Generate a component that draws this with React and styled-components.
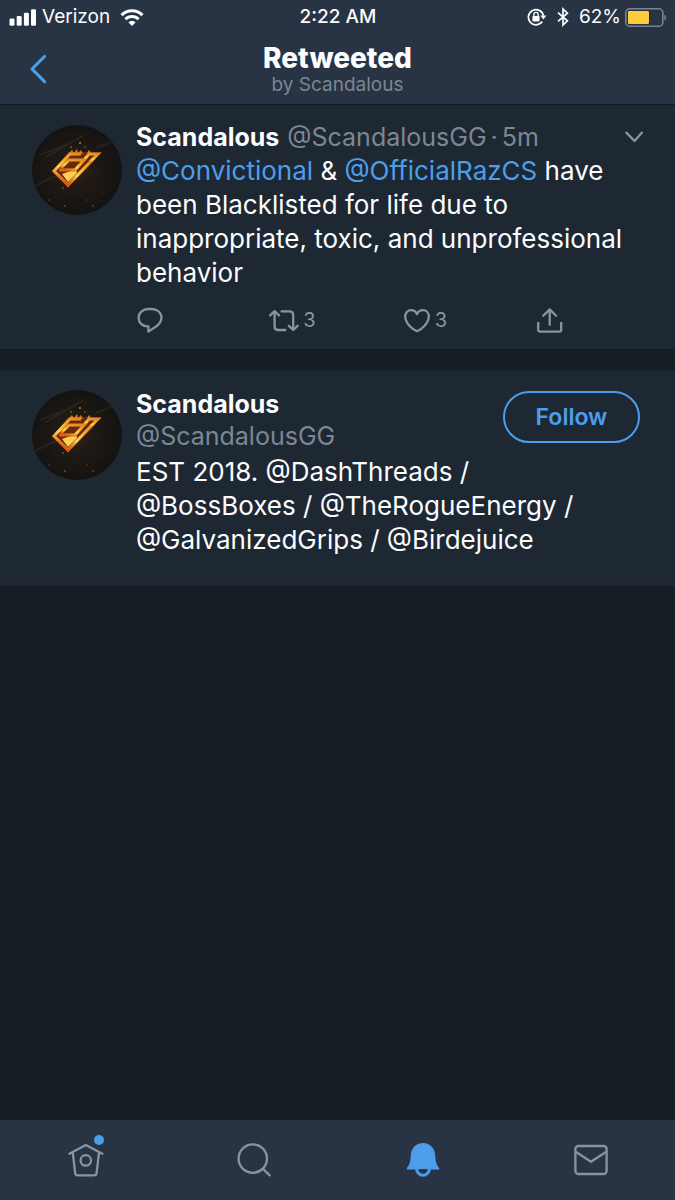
import React from 'react';
import styled, { createGlobalStyle, css } from 'styled-components';

const colors = {
  bar: '#283444',
  card: '#1e2833',
  page: '#171e25',
  line: '#111a22',
  blue: '#4c9eeb',
  grey: '#8794a3',
  muted: '#7c8793',
  white: '#fbfdff',
};

const GlobalStyle = createGlobalStyle`
  * {
    box-sizing: border-box;
  }

  body {
    margin: 0;
    background: ${colors.page};
    color: ${colors.white};
    font-family: Inter, 'Liberation Sans', sans-serif;
  }

  h1, h2, p {
    margin: 0;
  }

  a {
    color: ${colors.blue};
    text-decoration: none;
  }

  svg {
    display: block;
    flex: none;
  }
`;

const Screen = styled.div`
  display: flex;
  flex-direction: column;
  min-height: 100vh;
`;

const TopBar = styled.header`
  background: ${colors.bar};
  border-bottom: 1px solid ${colors.line};
`;

const StatusBar = styled.div`
  display: grid;
  grid-template-columns: 1fr auto 1fr;
  align-items: center;
  height: 34px;
  padding: 0 8px 0 9px;
  font-size: 19px;
  line-height: 24px;
`;

const StatusGroup = styled.div`
  display: flex;
  align-items: center;
  gap: ${({ $gap }) => $gap}px;
  justify-content: ${({ $end }) => ($end ? 'flex-end' : 'flex-start')};
`;

const Clock = styled.span`
  font-weight: 500;
`;

const NavBar = styled.div`
  display: grid;
  grid-template-columns: 76px 1fr 76px;
  align-items: center;
  height: 70px;
  text-align: center;
`;

const IconButton = styled.button`
  display: flex;
  align-items: center;
  gap: ${({ $gap }) => $gap || 0}px;
  padding: 0;
  border: 0;
  background: none;
  color: ${({ $blue }) => ($blue ? colors.blue : colors.grey)};
  font: inherit;
  font-size: 20px;
  line-height: 28px;
`;

const BackButton = styled(IconButton)`
  justify-content: center;
`;

const Title = styled.h1`
  font-size: 28px;
  line-height: 32px;
  font-weight: 800;
`;

const Subtitle = styled.p`
  color: ${colors.muted};
  font-size: 19px;
  line-height: 22px;
`;

const cardStyles = css`
  display: grid;
  grid-template-columns: 90px minmax(0, 1fr);
  column-gap: 14px;
  background: ${colors.card};
  border-bottom: 1px solid ${colors.line};
`;

const Tweet = styled.article`
  ${cardStyles}
  padding: 15px 32px 14px;
`;

const Profile = styled.section`
  ${cardStyles}
  margin-top: 19px;
  padding: 17px 35px 29px 32px;
  border-top: 1px solid ${colors.line};
`;

const AvatarLink = styled.a`
  align-self: start;
  padding-top: ${({ $top }) => $top}px;
`;

const Row = styled.div`
  display: flex;
  align-items: ${({ $align }) => $align || 'center'};
  justify-content: space-between;
`;

const Name = styled.h2`
  font-size: 25px;
  line-height: 34px;
  font-weight: 700;
`;

const Handle = styled.span`
  color: ${colors.muted};
  font-size: 25px;
  line-height: 30px;
`;

const Byline = styled.div`
  display: flex;
  align-items: center;
  gap: 8px;
  height: 34px;
`;

const Meta = styled.div`
  display: flex;
  gap: 4px;
`;

const Text = styled.p`
  font-size: 26px;
  line-height: 34px;
`;

const Bio = styled(Text)`
  padding-right: 16px;
`;

const Actions = styled.div`
  display: grid;
  grid-template-columns: repeat(3, 1fr) 26px;
  margin-top: 15px;
  padding: 1px 81px 1px 0;
`;

const FollowButton = styled.button`
  width: 137px;
  height: 52px;
  margin-top: 4px;
  border: 2px solid ${colors.blue};
  border-radius: 26px;
  background: none;
  color: ${colors.blue};
  font: inherit;
  font-size: 23px;
  font-weight: 600;
`;

const ProfileNames = styled.div`
  display: flex;
  flex-direction: column;
  padding-bottom: 4px;
`;

const TabBar = styled.nav`
  display: grid;
  grid-template-columns: repeat(4, 1fr);
  align-items: center;
  height: 80px;
  margin-top: auto;
  padding-left: 2px;
  background: ${colors.bar};
`;

const Tab = styled.a`
  display: flex;
  justify-content: center;
  color: ${({ $active }) => ($active ? colors.blue : colors.grey)};
`;

const TabIcon = styled.span`
  position: relative;
`;

const Dot = styled.span`
  position: absolute;
  top: -8px;
  right: 0;
  width: 10px;
  height: 10px;
  border-radius: 50%;
  background: ${colors.blue};
`;

const Stroke = ({ width, height, strokeWidth = 2.3, children }) => (
  <svg
    width={width}
    height={height}
    viewBox={`0 0 ${width} ${height}`}
    fill="none"
    stroke="currentColor"
    strokeWidth={strokeWidth}
    strokeLinecap="round"
    strokeLinejoin="round"
    aria-hidden="true"
  >
    {children}
  </svg>
);

const SignalIcon = () => (
  <svg width="27" height="17" viewBox="0 0 27 17" fill="currentColor">
    <rect x="0.5" y="9.5" width="5" height="7.3" rx="1.3" />
    <rect x="7.7" y="7" width="5" height="9.8" rx="1.3" />
    <rect x="14.9" y="3.8" width="5" height="13" rx="1.3" />
    <rect x="22" y="0.3" width="5" height="16.5" rx="1.3" />
  </svg>
);

const WifiIcon = () => (
  <svg width="24" height="17" viewBox="0 0 24 17" fill="none">
    <g stroke="currentColor" strokeWidth="3">
      <path d="M1.5 6.1A14.6 14.6 0 0 1 22.5 6.1" />
      <path d="M5.4 10.2A9.2 9.2 0 0 1 18.6 10.2" />
    </g>
    <path d="M8.4 13.2A5 5 0 0 1 15.6 13.2L12 16.9Z" fill="currentColor" />
  </svg>
);

const LockIcon = () => (
  <svg width="20" height="18" viewBox="0 0 20 18" fill="none">
    <path
      d="M15.2 13.6A7.6 7.6 0 1 1 16.4 7.6"
      stroke="currentColor"
      strokeWidth="1.7"
    />
    <path d="M13.3 7.4H19.4L16.4 11.5Z" fill="currentColor" />
    <rect x="5.4" y="8" width="7.2" height="5.4" rx="0.8" fill="currentColor" />
    <path
      d="M6.9 8.3V6.5A2.1 2.1 0 0 1 11.1 6.5V8.3"
      stroke="currentColor"
      strokeWidth="1.4"
    />
  </svg>
);

const BluetoothIcon = () => (
  <svg width="12" height="20" viewBox="0 0 12 20" fill="none">
    <path
      d="M1 5.6L10.4 13.8L6 18V2L10.4 6.2L1 14.4"
      stroke="currentColor"
      strokeWidth="1.7"
    />
  </svg>
);

const BatteryIcon = () => (
  <svg width="42" height="19" viewBox="0 0 42 19" fill="none">
    <rect
      x="0.8"
      y="0.8"
      width="37"
      height="17.4"
      rx="4"
      stroke="#7b8491"
      strokeWidth="1.6"
    />
    <path d="M23.5 3H25V16H23.5Z" fill="#1d2530" />
    <rect x="3" y="3" width="21" height="13" rx="1.2" fill="#fdcd3f" />
    <path d="M39.4 6.5A3.4 3.4 0 0 1 39.4 12.5Z" fill="#7b8491" />
  </svg>
);

const Avatar = ({ id }) => (
  <svg width="90" height="90" viewBox="0 0 90 90" role="img" aria-label="Scandalous">
    <defs>
      <radialGradient id={`${id}-bg`} cx="0.48" cy="0.5" r="0.55">
        <stop offset="0" stopColor="#3a1f0c" />
        <stop offset="0.35" stopColor="#1f1a15" />
        <stop offset="1" stopColor="#131210" />
      </radialGradient>
      <linearGradient id={`${id}-fire`} x1="0.9" y1="0" x2="0.3" y2="1">
        <stop offset="0" stopColor="#e98a20" />
        <stop offset="0.35" stopColor="#f3a52a" />
        <stop offset="0.65" stopColor="#ffd153" />
        <stop offset="1" stopColor="#e2600f" />
      </linearGradient>
      <clipPath id={`${id}-clip`}>
        <circle cx="45" cy="45" r="45" />
      </clipPath>
    </defs>
    <g clipPath={`url(#${id}-clip)`}>
      <rect width="90" height="90" fill={`url(#${id}-bg)`} />
      <g stroke="#857d6c" strokeOpacity="0.13" strokeWidth="2">
        <path d="M12 33L52 10M0 62L26 50M64 23L84 15M8 30L34 20" />
      </g>
      <path
        d="M36 27H69L59 40L36 62L20 47Z"
        fill="#8f3408"
        fillOpacity="0.6"
      />
      <path
        d="M30 49L44 44L45 48L36 57Z"
        fill="#ffcf4d"
      />
      <g
        fill="none"
        stroke={`url(#${id}-fire)`}
        strokeWidth="3"
        strokeLinejoin="miter"
      >
        <path d="M49 29H38L22 46L36 60L60 35" />
        <path d="M51 36L57 29H66L58 37" />
        <path d="M29 43L37 35H52L43 45H27" />
      </g>
      <path d="M24 48L36 59L43 52L36 63Z" fill="#d9530c" fillOpacity="0.7" />
      <g fill="#e2761b">
        <path d="M37 28L40 25L42 28L45 24L46 28L49 25L51 29Z" />
        <path d="M55 28L57 25L59 28Z" />
        <circle cx="48" cy="18" r="1" />
        <circle cx="39" cy="22" r="0.8" />
        <circle cx="53" cy="22" r="0.7" />
        <circle cx="31" cy="63" r="0.7" />
      </g>
      <g fill="#8a3d10">
        <circle cx="17" cy="75" r="0.8" />
        <circle cx="33" cy="81" r="1" />
        <circle cx="55" cy="75" r="0.7" />
        <circle cx="61" cy="81" r="0.9" />
        <circle cx="70" cy="69" r="0.6" />
      </g>
    </g>
  </svg>
);

const ReplyIcon = () => (
  <Stroke width={28} height={28}>
    <path d="M12.4 3H15.9C21.4 3 25.4 6.8 25.4 11.8C25.4 15.4 23.4 18 20.4 20.2L12.4 25.6V20.4H11.2C6.4 20.4 2.6 16.6 2.6 11.8C2.6 6.8 6.8 3 12.4 3Z" />
  </Stroke>
);

const RetweetIcon = () => (
  <Stroke width={30} height={28}>
    <path d="M1.2 9.4L5.6 5.2L10 9.4M5.6 5.6V20.4Q5.6 24 9.2 24H16.4" />
    <path d="M12.6 5.4H20.6Q24.2 5.4 24.2 9V23.6M19.8 19.8L24.2 24L28.6 19.8" />
  </Stroke>
);

const HeartIcon = () => (
  <Stroke width={28} height={28}>
    <path d="M14 25.3C9.4 23.4 2.2 17.2 2.2 10.6C2.2 6.8 4.8 4.1 8.1 4.1C10.8 4.1 13 5.5 14 8.2C15 5.5 17.2 4.1 19.9 4.1C23.2 4.1 25.8 6.8 25.8 10.6C25.8 17.2 18.6 23.4 14 25.3Z" />
  </Stroke>
);

const ShareIcon = () => (
  <Stroke width={28} height={28}>
    <path d="M2.2 16.8V23.8Q2.2 25.6 4 25.6H23.4Q25.2 25.6 25.2 23.8V16.8" />
    <path d="M13.7 18.8V3.6M7.3 9.8L13.7 3.4L20.1 9.8" />
  </Stroke>
);

const HomeIcon = () => (
  <Stroke width={36} height={34}>
    <path d="M1.4 10.8L17.8 2L34.4 10.8M4.8 9.6L7.2 30.2Q7.5 32.4 9.8 32.4H26Q28.3 32.4 28.6 30.2L31 9.6" />
    <circle cx="17.8" cy="17.4" r="5.2" />
  </Stroke>
);

const SearchIcon = () => (
  <Stroke width={34} height={34}>
    <circle cx="15.8" cy="15.6" r="14.2" />
    <path d="M25.8 25.6L32.6 32.4" />
  </Stroke>
);

const BellIcon = () => (
  <svg width="34" height="34" viewBox="0 0 34 34" fill="none">
    <path
      d="M17 0C24 0 28.8 5 29.2 12C29.5 18 30 21.4 33.2 25V26.4H0.8V25C4 21.4 4.5 18 4.8 12C5.2 5 10 0 17 0Z"
      fill="currentColor"
    />
    <path d="M12.4 26.2A4.6 4.6 0 0 0 21.6 26.2Z" fill={colors.bar} />
    <path
      d="M10.6 25.4A6.4 6.9 0 0 0 23.4 25.4"
      stroke="currentColor"
      strokeWidth="3"
    />
  </svg>
);

const MailIcon = () => (
  <Stroke width={34} height={34}>
    <rect x="1.4" y="3" width="31.2" height="28" rx="3" />
    <path d="M2 9L17 18.8L32 9" />
  </Stroke>
);

const tabs = [
  { label: 'Home', Icon: HomeIcon, dot: true },
  { label: 'Search', Icon: SearchIcon },
  { label: 'Notifications', Icon: BellIcon, active: true },
  { label: 'Messages', Icon: MailIcon },
];

const actions = [
  { label: 'Reply', Icon: ReplyIcon },
  { label: 'Retweet', Icon: RetweetIcon, count: 3 },
  { label: 'Like', Icon: HeartIcon, count: 3 },
  { label: 'Share', Icon: ShareIcon },
];

const App = () => {
  return (
    <Screen>
      <GlobalStyle />
      <TopBar>
        <StatusBar>
          <StatusGroup $gap={10}>
            <StatusGroup $gap={6}>
              <SignalIcon />
              <span>Verizon</span>
            </StatusGroup>
            <WifiIcon />
          </StatusGroup>
          <Clock>2:22 AM</Clock>
          <StatusGroup $gap={10} $end>
            <LockIcon />
            <BluetoothIcon />
            <StatusGroup $gap={4}>
              <span>62%</span>
              <BatteryIcon />
            </StatusGroup>
          </StatusGroup>
        </StatusBar>
        <NavBar>
          <BackButton $blue aria-label="Back">
            <Stroke width={18} height={30} strokeWidth={3}>
              <path d="M15.6 2.4L3 15L15.6 27.6" />
            </Stroke>
          </BackButton>
          <div>
            <Title>Retweeted</Title>
            <Subtitle>by Scandalous</Subtitle>
          </div>
        </NavBar>
      </TopBar>

      <main>
        <Tweet>
          <AvatarLink href="#profile" $top={5}>
            <Avatar id="tweet" />
          </AvatarLink>
          <div>
            <Row>
              <Byline>
                <Name>Scandalous</Name>
                <Meta>
                  <Handle>@ScandalousGG</Handle>
                  <Handle>·</Handle>
                  <Handle>5m</Handle>
                </Meta>
              </Byline>
              <IconButton aria-label="More">
                <Stroke width={18} height={12}>
                  <path d="M1.4 1.6L9.5 10L17 1.6" />
                </Stroke>
              </IconButton>
            </Row>
            <Text>
              <a href="#convictional">@Convictional</a> &amp;{' '}
              <a href="#officialrazcs">@OfficialRazCS</a> have been Blacklisted
              for life due to inappropriate, toxic, and unprofessional behavior
            </Text>
            <Actions>
              {actions.map(({ label, Icon, count }) => (
                <IconButton key={label} aria-label={label} $gap={4}>
                  <Icon />
                  {count && <span>{count}</span>}
                </IconButton>
              ))}
            </Actions>
          </div>
        </Tweet>

        <Profile id="profile">
          <AvatarLink href="#profile" $top={3}>
            <Avatar id="profile-avatar" />
          </AvatarLink>
          <div>
            <Row $align="flex-start">
              <ProfileNames>
                <Name>Scandalous</Name>
                <Handle>@ScandalousGG</Handle>
              </ProfileNames>
              <FollowButton>Follow</FollowButton>
            </Row>
            <Bio>
              EST 2018. @DashThreads / @BossBoxes / @TheRogueEnergy /
              @GalvanizedGrips / @Birdejuice
            </Bio>
          </div>
        </Profile>
      </main>

      <TabBar>
        {tabs.map(({ label, Icon, active, dot }) => (
          <Tab key={label} href={`#${label}`} aria-label={label} $active={active}>
            <TabIcon>
              <Icon />
              {dot && <Dot />}
            </TabIcon>
          </Tab>
        ))}
      </TabBar>
    </Screen>
  );
};

export default App;
